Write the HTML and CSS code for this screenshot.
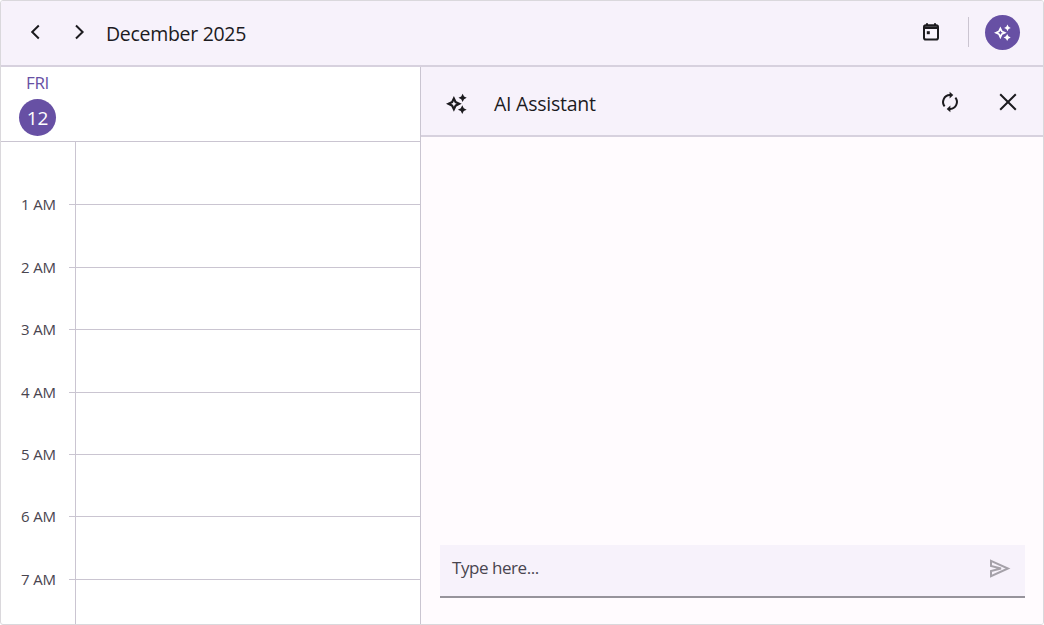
FILE: index.html
```html
<!DOCTYPE html>
<html lang="en">
<head>
    <meta charset="UTF-8">
    <meta name="viewport" content="width=device-width, initial-scale=1.0">
    <title>Scheduler</title>
    <link rel="stylesheet" href="styles.css">
</head>
<body>

<svg class="defs" width="0" height="0">
    <symbol id="sparkle" viewBox="0 0 24 24">
        <path fill-rule="evenodd" d="M9 3.4 L11.9 9.5 L18 12.4 L11.9 15.3 L9 21.4 L6.1 15.3 L0 12.4 L6.1 9.5 Z M9 9.2 L7.9 11.3 L5.8 12.4 L7.9 13.5 L9 15.6 L10.1 13.5 L12.2 12.4 L10.1 11.3 Z"/>
        <path d="M19 .8 L20.6 3.9 L23.7 5.5 L20.6 7.1 L19 10.2 L17.4 7.1 L14.3 5.5 L17.4 3.9 Z"/>
        <path d="M18.6 14 L20.3 17.3 L23.6 19 L20.3 20.7 L18.6 24 L16.9 20.7 L13.6 19 L16.9 17.3 Z"/>
    </symbol>
</svg>

<div class="scheduler">
    <header class="toolbar">
        <button class="btn btn-prev" aria-label="Previous">
            <svg width="10" height="16" viewBox="0 0 10 16"><path d="M8.8 1.5 L2.2 8 L8.8 14.5"/></svg>
        </button>
        <button class="btn btn-next" aria-label="Next">
            <svg width="10" height="16" viewBox="0 0 10 16"><path d="M2 1.5 L8.6 8 L2 14.5"/></svg>
        </button>
        <h1 class="month">December 2025</h1>
        <button class="btn btn-today" aria-label="Today">
            <svg width="18" height="20" viewBox="0 0 18 20">
                <rect x="2" y="3.3" width="14" height="14.2" rx="1.8"/>
                <path d="M2 5.6 H16" class="thick"/>
                <path d="M5 1.2 V4 M13 1.2 V4"/>
                <rect x="4.8" y="9.2" width="3" height="3" class="solid"/>
            </svg>
        </button>
        <span class="divider"></span>
        <button class="btn btn-ai" aria-label="AI">
            <svg width="17" height="17"><use href="#sparkle"/></svg>
        </button>
    </header>

    <main class="content">
        <section class="day-view">
            <div class="day-header">
                <span class="day-name">FRI</span>
                <span class="day-number">12</span>
            </div>
            <div class="slots">
                <div class="labels">
                    <div class="label"></div>
                    <div class="label">1 AM</div>
                    <div class="label">2 AM</div>
                    <div class="label">3 AM</div>
                    <div class="label">4 AM</div>
                    <div class="label">5 AM</div>
                    <div class="label">6 AM</div>
                    <div class="label">7 AM</div>
                </div>
                <div class="ticks">
                    <i></i><i></i><i></i><i></i><i></i><i></i><i></i><i></i>
                </div>
                <div class="cells">
                    <i></i><i></i><i></i><i></i><i></i><i></i><i></i><i></i>
                </div>
            </div>
        </section>

        <section class="assistant">
            <div class="assistant-header">
                <svg class="assistant-icon" width="21" height="21"><use href="#sparkle"/></svg>
                <h2 class="assistant-title">AI Assistant</h2>
                <button class="btn btn-refresh" aria-label="Refresh">
                    <svg width="18" height="20" viewBox="0 0 18 20">
                        <path d="M3.6 14.3 A6.9 6.9 0 0 1 8.8 3.1 H10"/>
                        <path d="M14.4 5.7 A6.9 6.9 0 0 1 9.2 16.9 H8"/>
                        <path d="M8.6 -.2 L12.3 3.1 L8.6 6.4 Z" class="solid"/>
                        <path d="M9.4 13.6 L5.7 16.9 L9.4 20.2 Z" class="solid"/>
                    </svg>
                </button>
                <button class="btn btn-close" aria-label="Close">
                    <svg width="18" height="18" viewBox="0 0 18 18"><path d="M1.2 1.2 L16.8 16.8 M16.8 1.2 L1.2 16.8"/></svg>
                </button>
            </div>
            <div class="messages"></div>
            <div class="composer">
                <span class="placeholder">Type here...</span>
                <svg class="send" width="22" height="19" viewBox="0 0 22 19">
                    <path d="M2 1.8 L19 9.5 L2 17.2 V12 L12 9.5 L2 7 Z"/>
                </svg>
            </div>
        </section>
    </main>
</div>

</body>
</html>
```
FILE: styles.css
```css
* {
    box-sizing: border-box;
}

body {
    margin: 0;
    font-family: "Open Sans", "Noto Sans", sans-serif;
    color: #1c1b1f;
    background-color: #fff;
}

.defs {
    position: absolute;
}

.scheduler {
    width: 1044px;
    height: 625px;
    display: flex;
    flex-direction: column;
    border: 1px solid #dad8dc;
    border-radius: 3px;
    overflow: hidden;
}

.toolbar {
    height: 66px;
    flex: none;
    display: flex;
    align-items: center;
    padding: 0 23px 2px 29px;
    background-color: #f7f2fb;
    border-bottom: 2px solid #d7d1de;
}

.btn {
    display: flex;
    align-items: center;
    justify-content: center;
    padding: 0;
    border: none;
    background: none;
    cursor: pointer;
}

.btn svg {
    fill: none;
    stroke: #1c1b1f;
    stroke-width: 2;
    overflow: visible;
}

.btn svg .solid {
    fill: #1c1b1f;
    stroke: none;
}

.btn svg .thick {
    stroke-width: 2.6;
}

.btn-next {
    margin-left: 34px;
}

.month {
    margin: 3px 0 0 22px;
    font-size: 19.5px;
    font-weight: 400;
    line-height: 26px;
    letter-spacing: -0.3px;
}

.btn-today {
    margin-left: auto;
}

.divider {
    width: 1px;
    height: 30px;
    margin: 0 16px 0 28px;
    background-color: #cbc5d1;
}

.btn-ai {
    width: 35px;
    height: 35px;
    border-radius: 50%;
    background-color: #6750a4;
}

.btn-ai svg {
    fill: #fff;
    stroke: none;
}

.content {
    flex: 1;
    min-height: 0;
    display: flex;
}

.day-view {
    width: 420px;
    display: flex;
    flex-direction: column;
    border-right: 1px solid #cac5d1;
}

.day-header {
    height: 75px;
    flex: none;
    display: flex;
    flex-direction: column;
    align-items: flex-start;
    padding: 6px 0 0 18px;
    border-bottom: 1px solid #cac5d1;
}

.day-name {
    width: 37px;
    font-size: 17px;
    line-height: 20px;
    letter-spacing: -0.3px;
    text-align: center;
    color: #6750a4;
}

.day-number {
    width: 37px;
    height: 37px;
    margin-top: 6px;
    border-radius: 50%;
    font-size: 19px;
    line-height: 39px;
    text-align: center;
    color: #fff;
    background-color: #6750a4;
}

.slots {
    flex: 1;
    min-height: 0;
    display: flex;
    padding-top: 1px;
    overflow: hidden;
}

.labels {
    width: 68px;
    padding-right: 13px;
}

.label {
    height: 62.4px;
    font-size: 15px;
    line-height: 20px;
    letter-spacing: -0.1px;
    text-align: right;
    color: #49454f;
    transform: translateY(-11px);
}

.ticks {
    width: 6px;
}

.cells {
    flex: 1;
    margin-top: -1px;
    padding-top: 1px;
    border-left: 1px solid #cac5d1;
}

.ticks i,
.cells i {
    display: block;
    height: 62.4px;
    border-bottom: 1px solid #cac5d1;
}

.assistant {
    flex: 1;
    display: flex;
    flex-direction: column;
    background-color: #fffbfe;
}

.assistant-header {
    height: 70px;
    flex: none;
    display: flex;
    align-items: center;
    padding: 2px 26px 0 25px;
    background-color: #f7f2fb;
    border-bottom: 2px solid #d7d1de;
}

.assistant-icon {
    margin-top: 2px;
    fill: #1c1b1f;
}

.assistant-title {
    margin: 4px 0 0 27px;
    font-size: 19.5px;
    font-weight: 400;
    line-height: 26px;
    letter-spacing: -0.25px;
}

.btn-refresh {
    margin-left: auto;
}

.btn-close {
    margin-left: 40px;
}

.messages {
    flex: 1;
}

.composer {
    height: 53px;
    display: flex;
    align-items: center;
    justify-content: space-between;
    margin: 0 18px 26px 19px;
    padding: 0 14px 5px 12px;
    background-color: #f7f2fb;
    border-bottom: 2px solid #96939b;
}

.placeholder {
    font-size: 17px;
    line-height: 24px;
    letter-spacing: -0.45px;
    color: #49454f;
}

.send {
    fill: none;
    stroke: #a5a1a9;
    stroke-width: 2;
}
```
